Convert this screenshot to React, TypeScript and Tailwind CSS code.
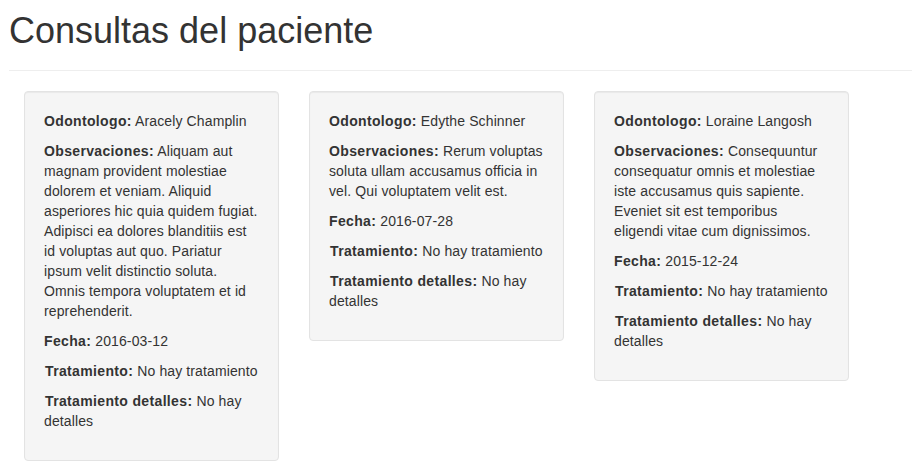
const consultas: { odontologo: string; observaciones: string; fecha: string; tratamiento: string; detalles: string }[] = [
    {
        odontologo: "Aracely Champlin",
        observaciones: "Aliquam aut magnam provident molestiae dolorem et veniam. Aliquid asperiores hic quia quidem fugiat. Adipisci ea dolores blanditiis est id voluptas aut quo. Pariatur ipsum velit distinctio soluta. Omnis tempora voluptatem et id reprehenderit.",
        fecha: "2016-03-12",
        tratamiento: "No hay tratamiento",
        detalles: "No hay detalles",
    },
    {
        odontologo: "Edythe Schinner",
        observaciones: "Rerum voluptas soluta ullam accusamus officia in vel. Qui voluptatem velit est.",
        fecha: "2016-07-28",
        tratamiento: "No hay tratamiento",
        detalles: "No hay detalles",
    },
    {
        odontologo: "Loraine Langosh",
        observaciones: "Consequuntur consequatur omnis et molestiae iste accusamus quis sapiente. Eveniet sit est temporibus eligendi vitae cum dignissimos.",
        fecha: "2015-12-24",
        tratamiento: "No hay tratamiento",
        detalles: "No hay detalles",
    },
]

const label = "tracking-[0.35px]"

export default function App() {
    return (
        <div className="min-h-[463px] bg-white pl-[9px] text-[14px] leading-[20px] text-[#333]" style={{ fontFamily: '"Liberation Sans", Arial, Helvetica, sans-serif' }}>

            <div className="border-b border-[#eee] pb-[9px] mb-5">
                <h1 className="mt-[11px] mb-[10px] text-[36px] leading-[39.6px] font-normal">Consultas del paciente</h1>
            </div>

            <div className="flex gap-[30px] pl-[15px] tracking-[0.12px]">
                {consultas.map(c => (
                    <div key={c.odontologo} className="w-[255px] self-start bg-[#f5f5f5] border border-[#e3e3e3] rounded p-[19px] shadow-[inset_0_1px_1px_rgba(0,0,0,0.05)] mb-5">
                        <p className="mb-[10px]"><strong className={label}>Odontologo:</strong> {c.odontologo}</p>
                        <p className="mb-[10px]"><strong className={label}>Observaciones:</strong> {c.observaciones}</p>
                        <p className="mb-[10px]"><strong className={label}>Fecha:</strong> {c.fecha}</p>
                        <p className="mb-[10px] pl-px"><strong className={label}>Tratamiento:</strong> {c.tratamiento}</p>
                        <p className="mb-[10px]"><strong className={`${label} pl-px`}>Tratamiento detalles:</strong> {c.detalles}</p>
                    </div>
                ))}
            </div>
        </div>
    )
}
